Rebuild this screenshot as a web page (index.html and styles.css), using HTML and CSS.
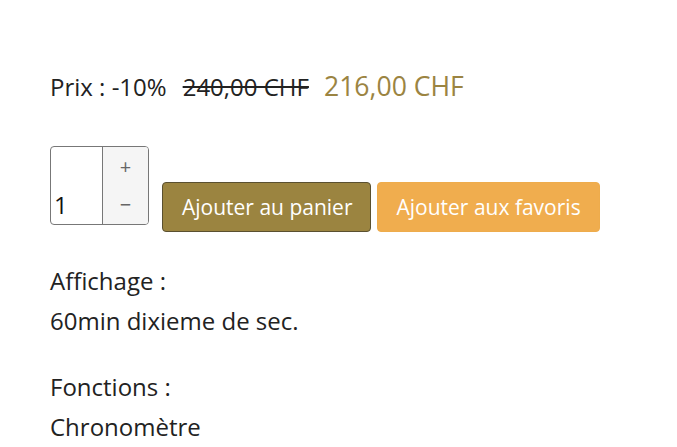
FILE: index.html
```html
<!DOCTYPE html>
<html lang="fr">
<head>
  <meta charset="UTF-8">
  <title>Produit</title>
  <link rel="stylesheet" href="styles.css">
</head>
<body>
  <div class="product">
    <div class="price">
      <span>Prix : -10%</span>
      <span class="old">240,00 CHF</span>
      <span class="new">216,00 CHF</span>
    </div>

    <div class="actions">
      <div class="qty">
        <div class="qty-val">1</div>
        <div class="qty-btns">
          <span>+</span>
          <span>&minus;</span>
        </div>
      </div>
      <button class="btn cart">Ajouter au panier</button>
      <button class="btn fav">Ajouter aux favoris</button>
    </div>

    <p>Affichage :<br>60min dixieme de sec.</p>
    <p>Fonctions :<br>Chronomètre</p>
  </div>
</body>
</html>
```

FILE: styles.css
```css
body { margin: 0; background: #fff; font-family: "Open Sans", sans-serif; color: #222; }
.product { padding: 68px 50px 0; }
.price { display: flex; align-items: baseline; height: 40px; }
.price .old { margin-left: 16px; text-decoration: line-through; text-decoration-thickness: 2px; }
.price .new { margin-left: 15px; font-size: 26.6px; color: #9b8442; }
.actions { display: flex; align-items: flex-start; margin-top: 38px; }
.qty {
  display: flex; width: 97px; height: 77px; border: 1px solid #777; border-radius: 4px; overflow: hidden;
}
.qty-val { width: 52px; border-right: 1px solid #777; font-size: 24px; color: #111; padding: 0 0 3px 3px; display: flex; align-items: flex-end; box-sizing: border-box; }
.qty-btns { flex: 1; background: #f5f5f5; display: flex; flex-direction: column; align-items: center; justify-content: space-around; color: #666; font-size: 20px; }
.btn {
  font-family: "Open Sans", sans-serif; font-size: 21px; color: #fff; height: 50px; padding: 0 18px;
  border-radius: 4px; margin-top: 36px; cursor: pointer;
}
.cart { margin-left: 13px; background: #9b8440; border: 1px solid #5a5030; padding: 0 18px 0 19px; }
.fav { margin-left: 6px; background: #f0ad4e; border: 1px solid #eeac4c; }
.price, p { font-size: 24px; }
p { line-height: 40px; margin: 29px 0 0; }
p + p { margin-top: 26px; }
```
